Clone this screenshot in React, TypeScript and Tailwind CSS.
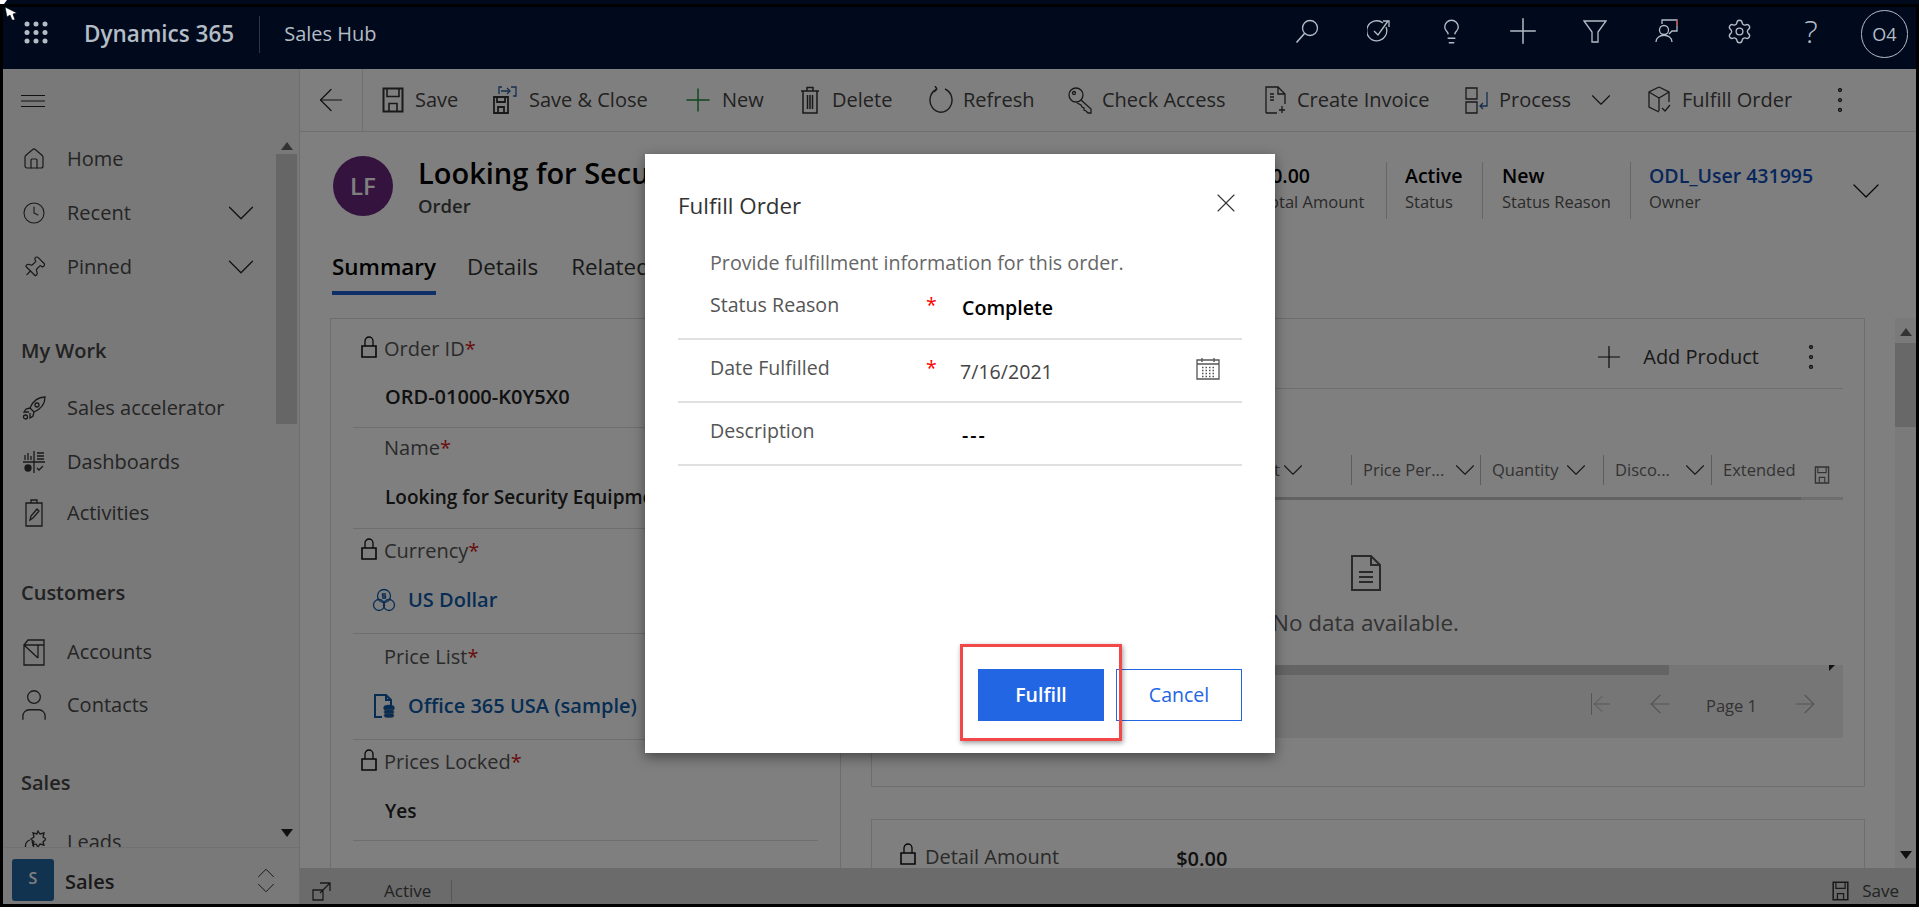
import type { ReactNode } from 'react';
import {
    ArrowLeft,
    ArrowRight,
    ChevronDown,
    ChevronUp,
    Clock,
    EllipsisVertical,
    House,
    Lightbulb,
    Pin,
    Plus,
    Settings,
    User,
    X,
} from 'lucide-react';

const Svg = ({ children, w = 24, h = 24, vb = '0 0 24 24', className = '' }: { children: ReactNode; w?: number; h?: number; vb?: string; className?: string }) => (
    <svg width={w} height={h} viewBox={vb} fill="none" stroke="currentColor" strokeWidth="1.3" className={`shrink-0 ${className}`}>
        {children}
    </svg>
);

const Lock = () => (
    <Svg w={16} h={22} vb="0 0 16 22" className="text-[#111]">
        <path d="M1 10h14v11H1z" strokeWidth="1.6" />
        <path d="M4 10V5a4 4 0 0 1 8 0v5" />
    </Svg>
);

const SaveIcon = ({ className = '', w = 22, h = 26 }: { className?: string; w?: number; h?: number }) => (
    <Svg w={w} h={h} vb="0 0 22 26" className={className}>
        <path d="M1.5 1.5h19v23h-19z" strokeWidth="2" />
        <path d="M5 1.5v8h12v-8M7 24.5v-8h8v8" strokeWidth="1.6" />
    </Svg>
);

const SaveCloseIcon = () => (
    <Svg w={24} h={28} vb="0 0 24 28">
        <path d="M1 11h14v16H1zM4 11v5h8v-5M5 27v-6h6v6" strokeWidth="1.8" />
        <path d="M6 8V1h3M18 1h5v9h-3M8 5h9" stroke="#2a5d9c" />
        <path d="M14 2l3 3-3 3" stroke="#2a5d9c" />
    </Svg>
);

const DeleteIcon = () => (
    <Svg w={20} h={28} vb="0 0 20 28">
        <path d="M1 5h18M7 5V1.5h6V5M3 5v22h14V5M7.5 9v14M10 9v14M12.5 9v14" strokeWidth="1.5" />
    </Svg>
);

const RefreshIcon = () => (
    <Svg w={24} h={28} vb="0 0 24 28">
        <path d="M8 3a11 12 0 1 0 8 0" strokeWidth="1.4" />
        <path d="M8 3l-2-3M8 3 5 6" strokeWidth="1.4" />
    </Svg>
);

const KeyIcon = () => (
    <Svg w={24} h={28} vb="0 0 24 28">
        <circle cx="8" cy="9" r="7" />
        <circle cx="6" cy="7" r="1.5" />
        <path d="M13 14l10 9v4h-3l-2-2-2-1v-2l-2-1-1-2-4-2" />
    </Svg>
);

const InvoiceIcon = () => (
    <Svg w={22} h={28} vb="0 0 22 28">
        <path d="M1 27V1h12l7 7v10M13 1v7h7M1 27h11M5 8h4M5 11h4M5 14h4M17 20v7M14 24h6" />
    </Svg>
);

const ProcessIcon = () => (
    <Svg w={24} h={28} vb="0 0 24 28">
        <path d="M1 2h11v11H1zM1 16h11v11H1z" />
        <path d="M22 6v14h-7M18 17l-3 3 3 3" stroke="#2a5d9c" />
    </Svg>
);

const BoxIcon = () => (
    <Svg w={24} h={28} vb="0 0 24 28">
        <path d="M11 1l10 5v10M11 1 1 6v15l10 5M1 6l10 6 10-6M11 12v13M14 22l3 3 5-6" />
    </Svg>
);

const CalendarIcon = () => (
    <Svg w={24} h={23} vb="0 0 24 23" className="text-[#555]">
        <path d="M1 3h22v19H1zM1 7h22M6 1v4M18 1v4" />
        <path d="M6 10.5h13M6 13.5h13M6 16.5h13M6 19.5h13" strokeDasharray="1.5 2" />
    </Svg>
);

const SearchIcon = () => (
    <Svg>
        <circle cx="15" cy="9" r="7.5" />
        <path d="M9.500 14.500 1.500 23.500" strokeWidth="1.6" />
    </Svg>
);

const FunnelIcon = () => (
    <Svg>
        <path d="M1 2h22l-8 11v10H9V13z" />
    </Svg>
);

const TargetIcon = () => (
    <Svg>
        <path d="M19 8a10 10 0 1 1-3-4" />
        <path d="M7 12l4 4 10-14M16 2h6v6" />
    </Svg>
);

const ChatPersonIcon = () => (
    <Svg>
        <circle cx="9" cy="11" r="4.5" />
        <path d="M1 23c0-9 16-9 16 0" />
        <path d="M7 5V1h15v11h-5l-3 3" />
        <path d="M22 1v6" stroke="#c43e3e" />
    </Svg>
);

const RocketIcon = () => (
    <Svg>
        <path d="M23 1c-7 0-12 4-15 11l4 4c7-3 11-8 11-15zM8 12l-4 1-2 3 5 0M12 16l-1 4-3 2 0-5" />
        <circle cx="15" cy="9" r="2" />
        <circle cx="3.5" cy="21" r="2" />
    </Svg>
);

const DashboardIcon = () => (
    <Svg>
        <path d="M12 1v22M1 12h22M3 10V5M6 10V3M9 10V6M15 3h7M15 6h7M15 9h7M15 18l2 2 4-4" />
        <circle cx="6" cy="18" r="3" fill="currentColor" />
    </Svg>
);

const ClipboardIcon = () => (
    <Svg w={18} h={28} vb="0 0 18 28">
        <path d="M1 4h16v23H1zM6 4V1h6v3M5 21l1-4 6-7 2 2-6 7z" />
    </Svg>
);

const AccountsIcon = () => (
    <Svg w={22} h={28} vb="0 0 22 28">
        <path d="M1 27V7h20v20zM1 7l4-5h16v25M1 7l14 13M15 7v13" />
    </Svg>
);

const LeadsIcon = () => (
    <Svg>
        <path d="M8 10c-6 2-6 9 0 13M10 11l2 7" />
        <path d="M16 1l2 3 4-1-1 4 3 2-3 3 1 3-4-1-2 3-2-3-3 1 1-3-3-3 3-2-1-4 4 1z" />
    </Svg>
);

const CurrencyIcon = () => (
    <Svg>
        <circle cx="12" cy="8" r="6.5" />
        <circle cx="7" cy="17" r="5.5" />
        <circle cx="17" cy="17" r="5.5" />
        <path d="M14 6h-3.500v2h3v2H10" />
    </Svg>
);

const PriceListIcon = () => (
    <Svg>
        <path d="M10 23H3V1h11l5 5v5M14 1v5h5" strokeWidth="2" />
        <ellipse cx="17" cy="14" rx="5" ry="2.5" fill="currentColor" />
        <ellipse cx="17" cy="18" rx="5" ry="2.5" fill="currentColor" stroke="#808080" strokeWidth="0.6" />
        <ellipse cx="17" cy="21.5" rx="5" ry="2.2" fill="currentColor" stroke="#808080" strokeWidth="0.6" />
    </Svg>
);

const DocIcon = () => (
    <Svg w={30} h={36} vb="0 0 30 36" className="text-[#555]">
        <path d="M1 1h19l9 9v25H1zM20 1v9h9" strokeWidth="2" />
        <path d="M8 17h14M8 22h14M8 27h14" strokeWidth="2" />
    </Svg>
);

const Triangle = ({ down = false, className = '' }: { down?: boolean; className?: string }) => (
    <svg width="12" height="8" viewBox="0 0 12 8" className={`shrink-0 ${className}`}>
        <path d={down ? 'M0 0h12L6 8z' : 'M0 8h12L6 0z'} fill={down ? '#222' : '#666'} />
    </svg>
);

const NavRow = ({ icon, label, chevron = false, className = 'h-[54px]' }: { icon: ReactNode; label: string; chevron?: boolean; className?: string }) => (
    <div className={`flex shrink-0 items-center pl-[19px] text-[20px] text-[#4a4a4a] ${className}`}>
        <span className="flex w-[24px] justify-center text-[#333]">{icon}</span>
        <span className="ml-[21px]">{label}</span>
        {chevron && <ChevronDown size={46} strokeWidth={0.65} className="ml-auto mr-[12px] shrink-0 text-[#222]" />}
    </div>
);

const NavHeading = ({ label, className }: { label: string; className: string }) => (
    <div className={`flex h-[54px] shrink-0 items-center pl-[18px] text-[20px] font-semibold text-[#444] ${className}`}>{label}</div>
);

const ToolItem = ({ icon, label, className, gap = 'ml-[10px]', children }: { icon: ReactNode; label: string; className: string; gap?: string; children?: ReactNode }) => (
    <div className={`flex shrink-0 items-center text-[20px] text-[#444] ${className}`}>
        <span className="flex w-[24px] justify-center text-[#333]">{icon}</span>
        <span className={`whitespace-nowrap ${gap}`}>{label}</span>
        {children}
    </div>
);

const Stat = ({ value, label, className, link = false }: { value: string; label: string; className: string; link?: boolean }) => (
    <div className={`h-[57px] shrink-0 whitespace-nowrap ${className}`}>
        <div className={`h-[27px] text-[19.5px] leading-[27px] font-semibold ${link ? 'text-[#0f4fb8]' : 'text-black'}`}>{value}</div>
        <div className="text-[16.5px] leading-[26px] text-[#555]">{label}</div>
    </div>
);

const FormRow = ({ label, value, locked = false, icon, className, gap = 'mt-[21px]', size = 'text-[20px]' }: { label: string; value: string; locked?: boolean; icon?: ReactNode; className: string; gap?: string; size?: string }) => (
    <div className={`shrink-0 border-b border-[#ddd] ${className}`}>
        <div className="flex h-[28px] items-center text-[20px] text-[#555]">
            <span className="flex w-[31px] justify-center pb-[4px]">{locked && <Lock />}</span>
            {label}
            <span className="text-[#d01818]">*</span>
        </div>
        <div className={`flex h-[28px] items-center pl-[32px] whitespace-nowrap font-semibold ${size} ${gap} ${icon ? 'text-[#0f5aa8]' : 'text-[#222]'}`}>
            {icon && <span className="-ml-[13px] mr-[12px] flex">{icon}</span>}
            {value}
        </div>
    </div>
);

const ColumnHead = ({ label, className, chevron }: { label: string; className: string; chevron?: string }) => (
    <div className={`flex h-[30px] shrink-0 items-center border-l border-[#bbb] pl-[11px] text-[16.5px] whitespace-nowrap text-[#666] ${className}`}>
        {label}
        {chevron && <ChevronDown size={34} strokeWidth={0.8} className={`shrink-0 text-[#333] ${chevron}`} />}
    </div>
);

const DialogRow = ({ label, required = false, value, pad, valuePad, icon, strong = true, valueClass = '' }: { label: string; required?: boolean; value: string; pad: string; valuePad: string; icon?: ReactNode; strong?: boolean; valueClass?: string }) => (
    <div className="flex h-[63px] items-start border-b-2 border-[#e0e0e0] pl-[32px] text-[19.6px]">
        <span className={`w-[216px] leading-[28px] text-[#555] ${pad}`}>{label}</span>
        <span className={`w-[36px] leading-[28px] text-[#f00] ${pad}`}>{required ? '*' : ''}</span>
        <span className={`leading-[28px] ${valuePad} ${valueClass} ${strong ? 'font-semibold text-black' : '-ml-[2px] text-[#444]'}`}>{value}</span>
        {icon && <span className="ml-auto mt-[17px] mr-[22px]">{icon}</span>}
    </div>
);

export default function App() {
    return (
        <div className="relative flex h-[907px] w-full flex-col overflow-hidden bg-black font-['Open_Sans',sans-serif]">
            <div className="h-[4px] shrink-0 bg-[#000a1c]" />
            <div className="h-[3px] shrink-0" />

            {/* top bar */}
            <header className="mx-[3px] flex h-[62px] shrink-0 items-center bg-[#000a1c] pb-[8px] text-[#b4bcc6]">
                <svg width="24" height="23" viewBox="0 0 24 23" className="-mt-[3px] ml-[21px] shrink-0" fill="currentColor">
                    <circle cx="3" cy="3" r="2.5" />
                    <circle cx="12" cy="3" r="2.5" />
                    <circle cx="21" cy="3" r="2.5" />
                    <circle cx="3" cy="11.5" r="2.5" />
                    <circle cx="12" cy="11.5" r="2.5" />
                    <circle cx="21" cy="11.5" r="2.5" />
                    <circle cx="3" cy="20" r="2.5" />
                    <circle cx="12" cy="20" r="2.5" />
                    <circle cx="21" cy="20" r="2.5" />
                </svg>
                <span className="ml-[36px] text-[22.5px] font-semibold">Dynamics 365</span>
                <span className="ml-[25px] h-[37px] w-px bg-[#2a3442]" />
                <span className="ml-[24px] text-[20px]">Sales Hub</span>
                <div className="-mt-[6px] ml-auto flex items-center">
                    {[
                        <SearchIcon />,
                        <TargetIcon />,
                        <Lightbulb size={27} strokeWidth={1.2} />,
                        <Plus size={42} strokeWidth={0.85} className="shrink-0" />,
                        <FunnelIcon />,
                        <ChatPersonIcon />,
                        <Settings size={27} strokeWidth={1.2} />,
                    ].map((icon, index) => (
                        <span key={index} className="flex w-[72px] justify-center">
                            {icon}
                        </span>
                    ))}
                    <span className="flex h-[30px] w-[72px] items-center justify-center text-[32px] font-light">?</span>
                </div>
                <div className="mr-[8px] ml-[14px] flex h-[48px] w-[47px] items-center justify-center rounded-full border border-[#b4bcc6] text-[18px]">O4</div>
            </header>

            <div className="relative mx-[3px] mb-[3px] flex min-h-0 flex-1 bg-white">
                {/* sidebar */}
                <aside className="flex w-[297px] shrink-0 flex-col border-r border-[#ddd] bg-[#f2f2f2]">
                    <div className="flex h-[63px] shrink-0 items-center pl-[18px] text-[#222]">
                        <Svg w={24} h={12} vb="0 0 24 12">
                            <path d="M0 .5h24M0 6h24M0 11.5h24" strokeWidth="1" />
                        </Svg>
                    </div>
                    <div className="flex min-h-0 flex-1">
                        <div className="flex min-w-0 flex-1 flex-col overflow-hidden">
                            <NavRow icon={<House size={26} strokeWidth={1.2} />} label="Home" />
                            <NavRow icon={<Clock size={28} strokeWidth={1.1} />} label="Recent" chevron />
                            <NavRow icon={<Pin size={25} strokeWidth={1.2} className="rotate-45" />} label="Pinned" chevron />
                            <NavHeading label="My Work" className="mt-[30px]" />
                            <NavRow icon={<RocketIcon />} label="Sales accelerator" className="mt-[3px] h-[54px]" />
                            <NavRow icon={<DashboardIcon />} label="Dashboards" />
                            <NavRow icon={<ClipboardIcon />} label="Activities" className="h-[48px]" />
                            <NavHeading label="Customers" className="mt-[29px]" />
                            <NavRow icon={<AccountsIcon />} label="Accounts" className="mt-[5px] h-[54px]" />
                            <NavRow icon={<User size={38} strokeWidth={0.8} className="shrink-0" />} label="Contacts" className="h-[52px]" />
                            <NavHeading label="Sales" className="mt-[25px]" />
                            <NavRow icon={<LeadsIcon />} label="Leads" className="mt-[5px] h-[54px]" />
                        </div>
                        <div className="mr-[2px] flex w-[21px] shrink-0 flex-col items-center">
                            <Triangle className="mt-[10px]" />
                            <div className="mt-[4px] h-[270px] w-full shrink-0 bg-[#cdcdcd]" />
                            <Triangle down className="mt-auto mb-[10px]" />
                        </div>
                    </div>
                    <div className="flex h-[57px] shrink-0 items-start border-t border-[#e0e0e0] pt-[11px] pl-[9px]">
                        <div className="flex h-[42px] w-[42px] items-center justify-center rounded-[3px] bg-[#25679f] pb-[4px] text-[16px] font-semibold text-white">S</div>
                        <span className="ml-[11px] text-[20px] leading-[46px] font-semibold text-[#333]">Sales</span>
                        <div className="ml-auto mr-[18px] -mt-[1px] flex flex-col text-[#333]">
                            <ChevronUp size={30} strokeWidth={0.8} />
                            <ChevronDown size={30} strokeWidth={0.8} className="-mt-[15px]" />
                        </div>
                    </div>
                </aside>

                <main className="flex min-w-0 flex-1 flex-col">
                    {/* command bar */}
                    <div className="flex h-[63px] shrink-0 items-center border-b border-[#dcdcdc]">
                        <div className="flex h-full w-[63px] shrink-0 items-center justify-center border-r border-[#dcdcdc] text-[#222]">
                            <ArrowLeft size={36} strokeWidth={0.8} />
                        </div>
                        <div className="flex items-center pl-[18px]">
                            <ToolItem icon={<SaveIcon />} label="Save" className="w-[112px]" />
                            <ToolItem icon={<SaveCloseIcon />} label="Save & Close" className="w-[193px]" gap="ml-[12px]" />
                            <ToolItem icon={<Plus size={38} strokeWidth={0.9} className="shrink-0 text-[#1c8a3c]" />} label="New" className="w-[112px]" gap="ml-[12px]" />
                            <ToolItem icon={<DeleteIcon />} label="Delete" className="w-[131px]" />
                            <ToolItem icon={<RefreshIcon />} label="Refresh" className="w-[139px]" />
                            <ToolItem icon={<KeyIcon />} label="Check Access" className="w-[196px]" />
                            <ToolItem icon={<InvoiceIcon />} label="Create Invoice" className="w-[201px]" gap="ml-[9px]" />
                            <ToolItem icon={<ProcessIcon />} label="Process" className="w-[183px]">
                                <ChevronDown size={34} strokeWidth={0.8} className="ml-[13px] shrink-0 text-[#222]" />
                            </ToolItem>
                            <ToolItem icon={<BoxIcon />} label="Fulfill Order" className="w-[182px]" />
                            <EllipsisVertical size={34} strokeWidth={1} className="-ml-[7px] text-[#222]" />
                        </div>
                    </div>

                    {/* record header */}
                    <div className="h-[186px] shrink-0 overflow-hidden">
                        <div className="flex h-[100px] pt-[24px]">
                            <div className="ml-[33px] flex h-[60px] w-[60px] shrink-0 items-center justify-center rounded-full bg-[#68267e] text-[24px] font-semibold text-white">LF</div>
                            <div className="ml-[25px] -mt-[1px] shrink-0">
                                <div className="h-[36px] text-[29px] leading-[36px] font-semibold whitespace-nowrap text-black">Looking for Security Equipment</div>
                                <div className="mt-[2px] text-[18.5px] leading-[26px] font-semibold text-[#444]">Order</div>
                            </div>
                            <div className="ml-auto mt-[6px] flex shrink-0 items-start">
                                <Stat value="$0.00" label="Total Amount" className="w-[127px] border-r border-[#ccc]" />
                                <Stat value="Active" label="Status" className="w-[96px] border-r border-[#ccc] pl-[18px]" />
                                <Stat value="New" label="Status Reason" className="w-[148px] border-r border-[#ccc] pl-[19px]" />
                                <Stat value="ODL_User 431995" label="Owner" className="w-[211px] pl-[18px]" link />
                                <ChevronDown size={48} strokeWidth={0.65} className="mr-[26px] mt-[5px] shrink-0 text-[#111]" />
                            </div>
                        </div>
                        <div className="flex h-[63px] pl-[32px] text-[22.4px]">
                            <div className="h-full border-b-4 border-[#1c5fd0] pt-[21px] leading-[28px] font-semibold text-black">Summary</div>
                            <div className="ml-[31px] pt-[21px] leading-[28px] text-[#333]">Details</div>
                            <div className="ml-[33px] pt-[21px] leading-[28px] text-[#333]">Related</div>
                        </div>
                    </div>

                    {/* body */}
                    <div className="flex min-h-0 flex-1 pl-[30px]">
                        <section className="flex w-[511px] shrink-0 flex-col overflow-hidden border-x border-t border-[#dcdcdc] px-[22px]">
                            <FormRow label="Order ID" value="ORD-01000-K0Y5X0" locked className="h-[109px] pt-[16px]" gap="mt-[20px]" />
                            <FormRow label="Name" value="Looking for Security Equipment" className="h-[101px] pt-[6px]" size="text-[19px]" />
                            <FormRow label="Currency" value="US Dollar" locked icon={<CurrencyIcon />} className="h-[105px] pt-[8px]" />
                            <FormRow label="Price List" value="Office 365 USA (sample)" icon={<PriceListIcon />} className="h-[106px] pt-[9px]" />
                            <FormRow label="Prices Locked" value="Yes" locked className="h-[101px] pt-[8px]" size="text-[19px]" />
                        </section>

                        <div className="ml-[30px] flex w-[994px] shrink-0 flex-col">
                            <section className="flex h-[469px] shrink-0 flex-col border border-[#dcdcdc] pr-[21px] pl-[16px]">
                                <div className="flex h-[70px] shrink-0 items-center justify-end border-b border-[#dcdcdc] pt-[6px] pr-[15px] text-[20px] text-[#333]">
                                    <Plus size={36} strokeWidth={0.8} className="shrink-0 text-[#111]" />
                                    <span className="ml-[16px]">Add Product</span>
                                    <EllipsisVertical size={34} strokeWidth={1} className="ml-[35px] shrink-0 text-[#222]" />
                                </div>
                                <div className="mt-[66px] flex h-[30px] shrink-0 items-center justify-end text-[#666]">
                                    <span className="text-[16.5px]">Product</span>
                                    <ChevronDown size={34} strokeWidth={0.8} className="mr-[41px] -ml-[4px] shrink-0 text-[#333]" />
                                    <ColumnHead label="Price Per..." className="w-[129px]" chevron="ml-auto -mr-[2px]" />
                                    <ColumnHead label="Quantity" className="w-[123px]" chevron="ml-auto mr-[10px]" />
                                    <ColumnHead label="Disco..." className="w-[108px]" chevron="ml-auto -mr-[1px]" />
                                    <ColumnHead label="Extended" className="w-[102px]" />
                                    <SaveIcon w={18} h={18} className="mr-[12px] mt-[10px] text-[#666]" />
                                </div>
                                <div className="mt-[12px] flex h-[3px] shrink-0 bg-[#dcdcdc]">
                                    <div className="h-full w-[913px] bg-[#c4c4c4]" />
                                </div>
                                <div className="mt-[55px] flex shrink-0 justify-center">
                                    <DocIcon />
                                </div>
                                <div className="mt-[17px] shrink-0 text-center text-[22.5px] leading-[30px] text-[#666]">No data available.</div>
                                <div className="mt-[27px] shrink-0 bg-[#ececec]">
                                    <div className="flex h-[10px]">
                                        <div className="h-full w-[781px] bg-[#c8c8c8]" />
                                        <div className="ml-auto mr-[8px] h-0 w-0 border-t-[6px] border-r-[6px] border-t-[#222] border-r-transparent" />
                                    </div>
                                    <div className="flex h-[63px] items-start justify-end pt-[15px] pr-[23px] text-[#aaa]">
                                        <span className="ml-auto flex h-[28px] items-center">
                                            <span className="h-[22px] w-px bg-[#aaa]" />
                                            <ArrowLeft size={26} strokeWidth={0.9} className="-ml-[3px] shrink-0" />
                                            <ArrowLeft size={30} strokeWidth={0.9} className="ml-[30px] shrink-0" />
                                            <span className="mt-[5px] ml-[31px] text-[16.5px] text-[#666]">Page 1</span>
                                            <ArrowRight size={30} strokeWidth={0.9} className="ml-[33px] shrink-0" />
                                        </span>
                                    </div>
                                </div>
                            </section>
                            <section className="mt-[32px] flex min-h-0 flex-1 items-start overflow-hidden border-x border-t border-[#dcdcdc] pt-[23px] pl-[28px]">
                                <Lock />
                                <span className="ml-[9px] text-[20px] leading-[28px] text-[#555]">Detail Amount</span>
                                <span className="ml-[117px] pt-[2px] text-[20px] leading-[28px] font-semibold text-[#222]">$0.00</span>
                            </section>
                        </div>

                        <div className="ml-[30px] flex w-[21px] shrink-0 flex-col items-center bg-[#f4f4f4]">
                            <Triangle className="mt-[10px]" />
                            <div className="mt-[7px] h-[84px] w-full shrink-0 bg-[#d0d0d0]" />
                            <Triangle down className="mt-auto mb-[9px]" />
                        </div>
                    </div>

                    {/* status bar */}
                    <div className="flex h-[36px] shrink-0 items-center bg-[#d6d6d6] pt-[10px] pl-[12px] text-[#444]">
                        <Svg w={19} h={19} vb="0 0 19 19" className="text-[#333]">
                            <path d="M1 8v10h10V8zM1 8h10M8 1h10v8M8 11l10-10M13 1h5v5" />
                        </Svg>
                        <span className="ml-[53px] text-[17px]">Active</span>
                        <span className="ml-[20px] h-[22px] w-px bg-[#aaa]" />
                        <span className="ml-auto flex items-center pr-[17px]">
                            <SaveIcon w={19} h={20} className="text-[#333]" />
                            <span className="ml-[12px] text-[17px]">Save</span>
                        </span>
                    </div>
                </main>

                {/* modal backdrop */}
                <div className="absolute inset-0 bg-black/50" />
            </div>

            {/* dialog */}
            <div className="absolute top-[154px] left-[645px] flex h-[599px] w-[630px] flex-col bg-white pr-[33px] pb-[32px] pl-[33px] text-[19.5px] shadow-[0_4px_12px_rgba(0,0,0,0.45)]">
                <div className="mt-[38px] flex h-[28px] shrink-0 items-center justify-between">
                    <span className="text-[22.4px] text-[#333]">Fulfill Order</span>
                    <X size={32} strokeWidth={0.8} className="-mt-[6px] shrink-0 text-[#333]" />
                </div>
                <div className="mt-[29px] h-[28px] shrink-0 pl-[32px] text-[19.7px] leading-[28px] text-[#666]">Provide fulfillment information for this order.</div>
                <DialogRow label="Status Reason" required value="Complete" pad="mt-[14px]" valuePad="mt-[17px]" />
                <DialogRow label="Date Fulfilled" required value="7/16/2021" pad="mt-[14px]" valuePad="mt-[18px]" strong={false} icon={<CalendarIcon />} />
                <DialogRow label="Description" value="---" pad="mt-[14px]" valuePad="mt-[18px]" valueClass="tracking-[2px]" />
                <div className="mt-auto flex shrink-0 justify-end gap-[12px]">
                    <button className="h-[52px] w-[126px] bg-[#2266e3] font-semibold text-white">Fulfill</button>
                    <button className="h-[52px] w-[126px] border border-[#2266e3] text-[#2266e3]">Cancel</button>
                </div>
                {/* callout round the primary button */}
                <div className="absolute top-[490px] left-[315px] h-[97px] w-[162px] border-[3px] border-[#f24848] shadow-[1px_2px_5px_rgba(0,0,0,0.4)]" />
            </div>

            {/* mouse pointer left in the capture */}
            <svg width="20" height="22" viewBox="0 0 20 22" className="absolute top-0 left-0">
                <path d="M0 0h7L4 4H0z" fill="#fff" />
                <path d="M5 7l12 6-4 1 2 6-3 0-2-5-3 2z" fill="#fff" stroke="#000" strokeWidth="0.6" />
            </svg>
        </div>
    );
}
